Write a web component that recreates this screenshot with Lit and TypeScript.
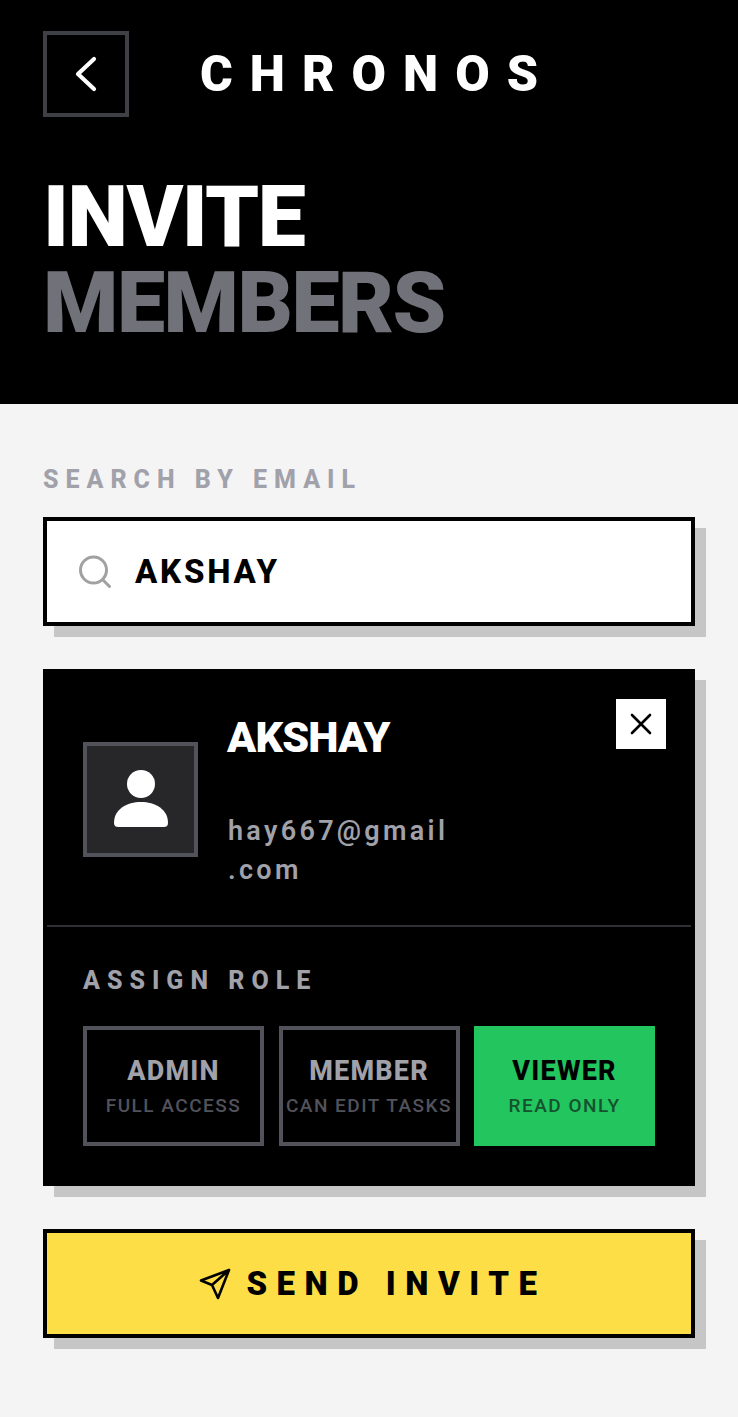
import { LitElement, html, css } from "lit";
import { customElement } from "lit/decorators.js";

@customElement("app-root")
export class AppRoot extends LitElement {
  static styles = css`
    :host { display: block; width: 738px; min-height: 1417px; background: #f4f4f5; font-family: Roboto, "Liberation Sans", sans-serif; color: #000; }
    * { box-sizing: border-box; }
    .head { background: #000; height: 404px; padding: 31px 43px 0; }
    .top { display: flex; align-items: center; gap: 71px; }
    .back { width: 86px; height: 86px; border: 4px solid #3f3f46; display: flex; align-items: center; justify-content: center; }
    .brand { color: #fff; font-size: 50px; font-weight: 900; letter-spacing: 17px; line-height: 1; white-space: nowrap; }
    h1 { margin: 57px 0 0; font-size: 86px; font-weight: 900; line-height: 86px; letter-spacing: -1.5px; color: #fff; }
    h1 span { display: block; color: #71717a; }
    .body { padding: 64px 43px 0; }
    .label { font-size: 25px; font-weight: 800; letter-spacing: 7px; line-height: 24px; color: #a1a1aa; white-space: nowrap; }
    .search { margin-top: 25px; height: 109px; border: 4px solid #000; background: #fff; box-shadow: 11px 11px 0 #c6c6c6; display: flex; align-items: center; padding-left: 31px; gap: 23px; }
    .query { font-size: 33px; font-weight: 800; letter-spacing: 2.8px; }
    .card { position: relative; margin-top: 43px; background: #000; border: 4px solid #000; box-shadow: 11px 11px 0 #c6c6c6; height: 517px; }
    .person { height: 254px; display: flex; align-items: center; padding-left: 36px; gap: 30px; border-bottom: 2px solid #2f2f34; }
    .avatar { width: 115px; height: 115px; flex: none; background: #27272a; border: 4px solid #52525b; display: flex; align-items: center; justify-content: center; }
    .who { align-self: flex-start; padding-top: 40px; }
    .name { color: #fff; font-size: 43px; font-weight: 900; line-height: 48px; letter-spacing: -0.8px; margin-left: -1px; }
    .mail { margin-top: 51px; color: #a1a1aa; font-size: 27px; font-weight: 600; line-height: 39px; letter-spacing: 3.3px; }
    .close { position: absolute; top: 26px; right: 25px; width: 50px; height: 50px; background: #fff; display: flex; align-items: center; justify-content: center; }
    .assign { padding: 42px 36px 0; }
    .roles { margin-top: 33px; display: grid; grid-template-columns: repeat(3, 181px); gap: 14.5px; }
    .role { height: 120px; border: 4px solid #52525b; display: flex; flex-direction: column; align-items: center; justify-content: center; gap: 7px; white-space: nowrap; }
    .role b { font-size: 27px; font-weight: 800; line-height: 32px; letter-spacing: 1.2px; color: #a1a1aa; }
    .role small { font-size: 19px; font-weight: 500; line-height: 24px; letter-spacing: 1.5px; color: #52525b; }
    .role.on { background: #22c55e; border-color: #22c55e; }
    .role.on b { color: #000; }
    .role.on small { color: #14532d; }
    .send { margin-top: 43px; height: 109px; border: 4px solid #000; background: #fede47; box-shadow: 11px 11px 0 #c6c6c6; display: flex; align-items: center; justify-content: center; padding-left: 8px; gap: 15px; font-size: 33px; font-weight: 900; letter-spacing: 9.5px; white-space: nowrap; }
    svg { display: block; flex: none; }
  `;

  render() {
    return html`
      <div class="head">
        <div class="top">
          <div class="back">
            <svg width="40" height="40" viewBox="0 0 40 40" fill="none" stroke="#fff" stroke-width="4.2" stroke-linecap="round" stroke-linejoin="round"><path d="M28 5 L12 20 L28 35" /></svg>
          </div>
          <div class="brand">CHRONOS</div>
        </div>
        <h1>INVITE<span>MEMBERS</span></h1>
      </div>
      <div class="body">
        <div class="label">SEARCH BY EMAIL</div>
        <div class="search">
          <svg width="34" height="34" viewBox="0 0 34 34" fill="none" stroke="#a1a1a1" stroke-width="3" stroke-linecap="round"><circle cx="15.5" cy="15" r="13"/><path d="M25 25 L31.5 31.5"/></svg>
          <div class="query">AKSHAY</div>
        </div>
        <div class="card">
          <div class="person">
            <div class="avatar">
              <svg width="56" height="60" viewBox="0 0 56 60" fill="#fff"><circle cx="28" cy="15" r="14"/><path d="M1 54 C1 40 14 33 28 33 C42 33 55 40 55 54 C55 57 53 58 51 58 L5 58 C3 58 1 57 1 54 Z"/></svg>
            </div>
            <div class="who">
              <div class="name">AKSHAY</div>
              <div class="mail">hay667@gmail<br />.com</div>
            </div>
          </div>
          <div class="close">
            <svg width="24" height="24" viewBox="0 0 24 24" fill="none" stroke="#000" stroke-width="2.6" stroke-linecap="round"><path d="M3 3 L21 21 M21 3 L3 21"/></svg>
          </div>
          <div class="assign">
            <div class="label">ASSIGN ROLE</div>
            <div class="roles">
              <div class="role"><b>ADMIN</b><small>FULL ACCESS</small></div>
              <div class="role"><b>MEMBER</b><small>CAN EDIT TASKS</small></div>
              <div class="role on"><b>VIEWER</b><small>READ ONLY</small></div>
            </div>
          </div>
        </div>
        <div class="send">
          <svg width="32" height="32" viewBox="0 0 32 32" fill="none" stroke="#000" stroke-width="2.6" stroke-linecap="round" stroke-linejoin="round"><path d="M30 2 L2 12.5 L13 17 L19 30 Z M30 2 L13 17"/></svg>
          <span>SEND INVITE</span>
        </div>
      </div>
    `;
  }
}
